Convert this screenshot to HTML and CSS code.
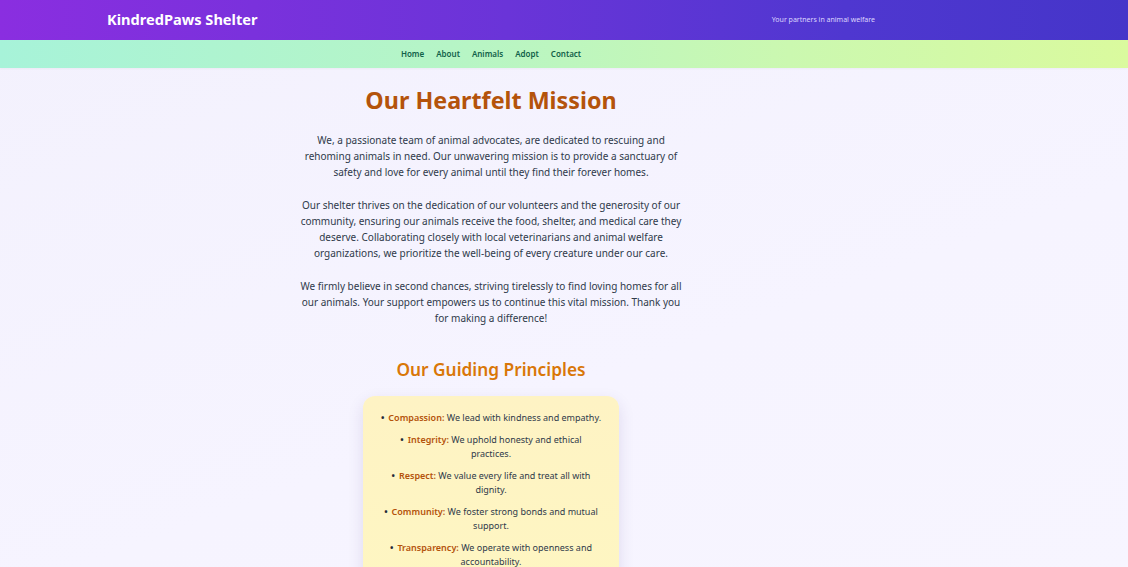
FILE: index.html
```html
<!DOCTYPE html>
<html lang="en">
<head>
<meta charset="utf-8">
<title>KindredPaws Shelter</title>
<link rel="stylesheet" href="styles.css">
</head>
<body>
<header class="site-header">
  <div class="wrap header-inner">
    <h1 class="brand">KindredPaws Shelter</h1>
    <p class="tagline">Your partners in animal welfare</p>
  </div>
</header>
<nav class="site-nav">
  <div class="wrap nav-inner">
    <a href="#">Home</a>
    <a href="#">About</a>
    <a href="#">Animals</a>
    <a href="#">Adopt</a>
    <a href="#">Contact</a>
  </div>
</nav>
<main class="wrap main">
  <h2 class="mission-title">Our Heartfelt Mission</h2>
  <div class="mission-text">
    <p>We, a passionate team of animal advocates, are dedicated to rescuing and rehoming animals in need. Our unwavering mission is to provide a sanctuary of safety and love for every animal until they find their forever homes.</p>
    <p>Our shelter thrives on the dedication of our volunteers and the generosity of our community, ensuring our animals receive the food, shelter, and medical care they deserve. Collaborating closely with local veterinarians and animal welfare organizations, we prioritize the well-being of every creature under our care.</p>
    <p>We firmly believe in second chances, striving tirelessly to find loving homes for all our animals. Your support empowers us to continue this vital mission. Thank you for making a difference!</p>
  </div>
  <h3 class="principles-title">Our Guiding Principles</h3>
  <div class="principles-card">
    <ul class="principles">
      <li><strong>Compassion:</strong> We lead with kindness and empathy.</li>
      <li><strong>Integrity:</strong> We uphold honesty and ethical practices.</li>
      <li><strong>Respect:</strong> We value every life and treat all with dignity.</li>
      <li><strong>Community:</strong> We foster strong bonds and mutual support.</li>
      <li><strong>Transparency:</strong> We operate with openness and accountability.</li>
    </ul>
  </div>
</main>
</body>
</html>
```
FILE: styles.css
```css
* { box-sizing: border-box; }
html, body { margin: 0; padding: 0; }
body {
  font-family: "Noto Sans", "Open Sans", sans-serif;
  background: linear-gradient(160deg, #f3f1fd 0%, #f6f4ff 60%, #f7f5ff 100%);
  min-height: 567px;
  color: #374151;
}
.wrap {
  width: 768px;
  margin-left: 107px;
}
.site-header {
  background: linear-gradient(90deg, #8a2ee0 0%, #6a34d8 45%, #4f37d0 75%, #4535c9 100%);
  height: 40px;
}
.header-inner {
  height: 40px;
  display: flex;
  align-items: center;
  justify-content: space-between;
}
.brand {
  margin: 0;
  color: #ffffff;
  font-size: 14.6px;
  font-weight: 700;
  line-height: 1;
  padding-bottom: 2px;
}
.tagline {
  margin: 0;
  color: #ddd6fe;
  font-size: 7px;
  padding-bottom: 1px;
}
.site-nav {
  background: linear-gradient(90deg, #a7f3d9 0%, #b6f5c6 40%, #cbf8b0 70%, #dafa9e 100%);
  height: 28px;
  box-shadow: 0 1px 2px rgba(0,0,0,0.04);
}
.nav-inner {
  height: 28px;
  display: flex;
  align-items: center;
  justify-content: center;
  gap: 12px;
}
.nav-inner a {
  color: #116149;
  text-decoration: none;
  font-size: 8px;
  font-weight: 600;
  padding-bottom: 1px;
}
.main {
  display: flex;
  flex-direction: column;
  align-items: center;
  padding-top: 15px;
}
.mission-title {
  margin: 0;
  color: #b4530b;
  font-size: 23.3px;
  font-weight: 700;
  line-height: 34px;
}
.mission-text {
  width: 386px;
  margin-top: 15px;
  text-align: center;
  font-size: 10px;
  line-height: 16px;
  color: #2f3a4a;
}
.mission-text p { margin: 0 0 17px; }
.mission-text p:last-child { margin-bottom: 0; }
.principles-title {
  margin: 32px 0 0;
  color: #d97708;
  font-size: 17.3px;
  font-weight: 600;
  line-height: 24px;
}
.principles-card {
  margin-top: 14px;
  width: 256px;
  background: linear-gradient(180deg, #fef3c4, #fef6c2);
  border-radius: 12px;
  padding: 15px 17px 10px;
  box-shadow: 0 6px 16px rgba(60, 40, 120, 0.13);
}
.principles {
  margin: 0;
  padding: 0;
  list-style: none;
  text-align: center;
  font-size: 9px;
  line-height: 14px;
  color: #2f3a4a;
}
.principles li { margin-bottom: 8px; }
.principles li::before {
  content: "\2022";
  color: #1f2937;
  font-weight: 700;
  margin-right: 4px;
}
.principles strong {
  color: #b4530b;
  font-weight: 600;
}
```
